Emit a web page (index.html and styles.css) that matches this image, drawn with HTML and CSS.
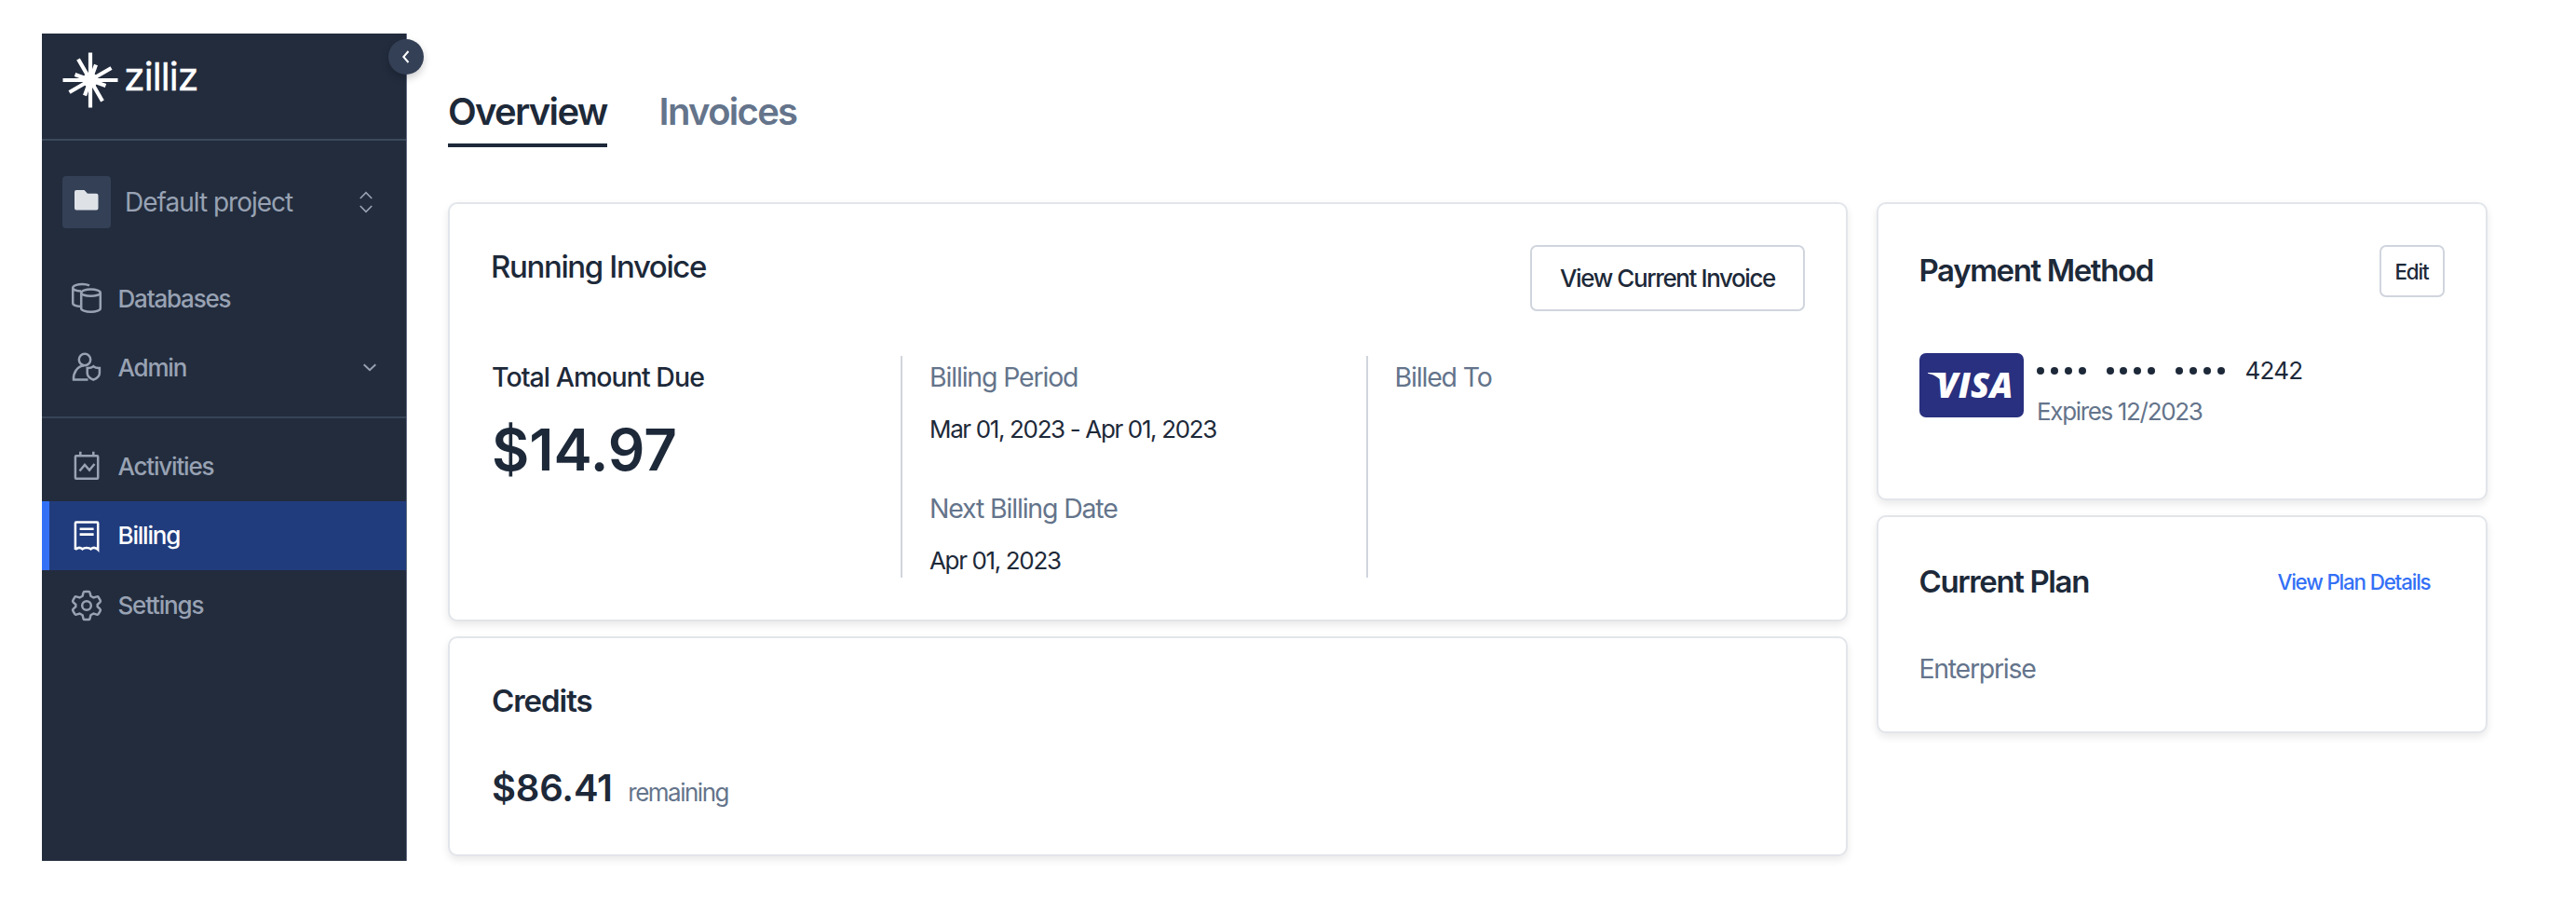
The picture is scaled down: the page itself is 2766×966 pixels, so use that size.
FILE: index.html
```html
<!DOCTYPE html>
<html lang="en">
<head>
<meta charset="utf-8">
<title>Billing</title>
<link rel="stylesheet" href="styles.css">
</head>
<body>
<div class="app">
  <aside class="sidebar">
    <button class="collapse" aria-label="Collapse sidebar">
      <svg width="10" height="16" viewBox="0 0 10 16"><path d="M7.500 2L2.300 8l5.200 6" fill="none" stroke="#fff" stroke-width="2"/></svg>
    </button>
    <div class="brand">
      <svg class="brand-mark" width="60" height="60" viewBox="-30 -30 60 60">
        <g stroke="#fff" stroke-width="4.200">
          <path d="M0-29.500V29.500M-29.500 0H29.500M-13-22.500L13 22.500M22.500-13L-22.500 13"/>
          <path d="M6-16.500L-6 16.500M-16.500-6L16.500 6"/>
        </g>
        <circle r="8" fill="#fff"/>
      </svg>
      <span class="brand-name">zilliz</span>
    </div>
    <div class="project">
      <span class="project-tile">
        <svg width="26" height="22" viewBox="0 0 26 22"><path d="M2 0H10.500L14 3.700H23.500a2 2 0 0 1 2 2V19.500a2 2 0 0 1-2 2H2a2 2 0 0 1-2-2V2a2 2 0 0 1 2-2z" fill="#dee2e7"/></svg>
      </span>
      <span class="project-name">Default project</span>
      <svg class="project-sort" width="14" height="24" viewBox="0 0 14 24"><path d="M.8 8L7 1.600 13.200 8M.8 16L7 22.400 13.200 16" fill="none" stroke="#98a2b3" stroke-width="1.700"/></svg>
    </div>
    <nav class="nav nav-top">
      <a class="nav-item">
        <svg class="nav-icon" viewBox="0 0 32 32"><ellipse cx="20.500" cy="10.200" rx="10.300" ry="3.600"/><path d="M10.200 10.200V27c0 2 4.600 3.700 10.300 3.700S30.800 29 30.800 27V10.200"/><path d="M19 2.400C17 1.500 14.500 1 11.700 1 5.800 1 1.200 2.700 1.200 4.800S5 8.400 10 8.600M1.200 4.800V21.500c0 1.800 3.500 3.300 9 3.600"/></svg>
        <span>Databases</span>
      </a>
      <a class="nav-item">
        <svg class="nav-icon" viewBox="0 0 32 32"><circle cx="14" cy="7" r="6.200"/><path d="M17.500 28.500H2c-.6-7 4-14.700 11-15"/><path d="M23.300 14.200c2 1.600 4.300 2 6.600 1.800v5.500c0 3.300-3 5.700-6.600 7.200-3.600-1.500-6.600-3.900-6.600-7.200V16c2.300.2 4.600-.2 6.600-1.800z"/></svg>
        <span>Admin</span>
        <svg class="nav-caret" width="14" height="9" viewBox="0 0 14 9"><path d="M.7 1.200L7 7.200 13.300 1.200" fill="none" stroke="#98a2b3" stroke-width="1.900"/></svg>
      </a>
    </nav>
    <nav class="nav nav-bottom">
      <a class="nav-item">
        <svg class="nav-icon" viewBox="0 0 32 32"><rect x="3.900" y="5.200" width="24.300" height="24.500" rx="1"/><path d="M9.300.8V5M23.300.8V5M8.500 21.500L14 15l5 5.500 5.500-6.500"/></svg>
        <span>Activities</span>
      </a>
      <a class="nav-item active">
        <svg class="nav-icon" viewBox="0 0 32 32"><path d="M3.900 31V2.500a1 1 0 0 1 1-1H27.200a1 1 0 0 1 1 1V31C25.500 28.200 23 28.200 20.500 30.300 18.500 28.600 13.500 28.600 11.500 30.300 9 28.200 6.500 28.200 3.900 31"/><path d="M8.600 8.700H23.600M8.600 14.600H23.600" stroke-width="2.600"/></svg>
        <span>Billing</span>
      </a>
      <a class="nav-item">
        <svg class="nav-icon" viewBox="0 0 32 32"><circle cx="16" cy="16" r="4.800"/><path d="M14 .9h4a1.500 1.500 0 0 1 1.500 1.200l.9 3.700 3 1.700 3.600-1.100a1.500 1.500 0 0 1 1.800.7l1.900 3.300a1.500 1.500 0 0 1-.3 1.900L27.700 14.900v2.200l2.700 2.600a1.500 1.500 0 0 1 .3 1.900l-1.900 3.300a1.500 1.500 0 0 1-1.800.7l-3.600-1.100-3 1.700-.9 3.700a1.500 1.500 0 0 1-1.500 1.200h-4a1.500 1.500 0 0 1-1.500-1.200l-.9-3.700-3-1.700-3.600 1.100a1.500 1.500 0 0 1-1.800-.7L1.300 21.600a1.500 1.500 0 0 1 .3-1.900L4.300 17.100v-2.200L1.600 12.300a1.500 1.500 0 0 1-.3-1.900L3.200 7.100A1.500 1.500 0 0 1 5 6.400l3.600 1.100 3-1.700.9-3.700A1.500 1.500 0 0 1 14 .9z"/></svg>
        <span>Settings</span>
      </a>
    </nav>
  </aside>

  <main class="main">
    <div class="tabs">
      <a class="tab current">Overview</a>
      <a class="tab">Invoices</a>
    </div>
    <div class="columns">
      <div class="col col-left">
        <section class="card invoice">
          <header class="card-head">
            <h2 class="title title-medium title-top">Running Invoice</h2>
            <button class="btn btn-large">View Current Invoice</button>
          </header>
          <div class="facts">
            <div class="fact fact-total">
              <div class="label label-strong">Total Amount Due</div>
              <div class="amount">$14.97</div>
            </div>
            <div class="fact fact-period">
              <div class="label">Billing Period</div>
              <div class="value">Mar 01, 2023 - Apr 01, 2023</div>
              <div class="label label-next">Next Billing Date</div>
              <div class="value">Apr 01, 2023</div>
            </div>
            <div class="fact fact-to">
              <div class="label">Billed To</div>
            </div>
          </div>
        </section>
        <section class="card credits">
          <h2 class="title title-credits">Credits</h2>
          <div class="credit-line"><span class="credit-amount">$86.41</span><span class="credit-note">remaining</span></div>
        </section>
      </div>
      <div class="col col-right">
        <section class="card payment">
          <header class="card-head">
            <h2 class="title title-payment">Payment Method</h2>
            <button class="btn btn-small">Edit</button>
          </header>
          <div class="method">
            <span class="visa">
              <span class="visa-name">VISA</span>
              <svg class="visa-flick" width="18" height="13" viewBox="0 0 18 13"><path d="M0 0H12.500a2 2 0 0 1 2 1.600L17 12.500C14 6.500 7.500 2.200 0 .8z" fill="#fff"/></svg>
            </span>
            <div class="method-info">
              <div class="number">
                <span class="dots"><i></i><i></i><i></i><i></i></span>
                <span class="dots"><i></i><i></i><i></i><i></i></span>
                <span class="dots"><i></i><i></i><i></i><i></i></span>
                <span class="last4">4242</span>
              </div>
              <div class="expires">Expires 12/2023</div>
            </div>
          </div>
        </section>
        <section class="card plan">
          <header class="card-head">
            <h2 class="title title-plan">Current Plan</h2>
            <a class="link">View Plan Details</a>
          </header>
          <div class="plan-name">Enterprise</div>
        </section>
      </div>
    </div>
  </main>
</div>
</body>
</html>
```
FILE: styles.css
```css
* { box-sizing: border-box; }
body { margin: 0; background: #fff; color: #1d2939; font-family: Inter, "Liberation Sans", sans-serif; }
.app { display: flex; width: 2766px; height: 966px; padding: 36px 0 42px 45px; white-space: nowrap; }

.sidebar { position: relative; flex: none; width: 392px; height: 888px; background: #222c3d; border-right: 1px solid #667085; color: #98a2b3; }
.collapse { position: absolute; left: 372px; top: 6px; width: 38px; height: 38px; padding: 0; border: 0; border-radius: 50%; background: #344056; box-shadow: 0 4px 8px rgba(0, 0, 0, .2); display: flex; align-items: center; justify-content: center; }
.brand { display: flex; height: 115px; padding: 20px 0 0 22px; border-bottom: 2px solid #3b495c; }
.brand-name { margin: 1px 0 0 6px; font-size: 41px; line-height: 50px; letter-spacing: -.900px; color: #fff; -webkit-text-stroke: .400px #fff; }
.project { display: flex; align-items: center; height: 56px; margin-top: 38px; padding: 0 36px 0 22px; }
.project-tile { display: flex; justify-content: center; width: 52px; height: 56px; padding-top: 15px; border-radius: 4px; background: #344056; }
.project-name { flex: 1; margin-left: 15px; font-size: 28px; line-height: 40px; letter-spacing: -1px; }
.nav-top { height: 166px; margin-top: 38px; border-bottom: 2px solid #374458; }
.nav-bottom { margin-top: 14px; }
.nav-item { display: flex; align-items: center; gap: 17.500px; height: 74.670px; padding: 0 32px; font-size: 26px; font-weight: 500; letter-spacing: -1.200px; }
.nav-icon { width: 32px; height: 32px; overflow: visible; fill: none; stroke: currentColor; stroke-width: 2.500; }
.nav-caret { margin-left: auto; }
.active { color: #fff; background: #213c7d; box-shadow: inset 8px 0 #3370f6; }

.main { padding: 60px 0 0 44px; }
.tabs { display: flex; gap: 56px; height: 121px; }
.tab { height: 61.500px; font-size: 40px; font-weight: 600; line-height: 48px; letter-spacing: -1.700px; color: #64748b; }
.current { color: #1d2939; border-bottom: 4px solid #1d2939; }
.columns { display: flex; gap: 30.500px; align-items: flex-start; }
.col { display: flex; flex-direction: column; gap: 15.500px; }
.col-left { width: 1503px; }
.col-right { width: 656px; }
.card { padding: 44px 44px 0; border: 2px solid #e2e5ea; border-radius: 10px; background: #fff; box-shadow: 0 4px 8px rgba(0, 0, 0, .09); }
.card-head { display: flex; justify-content: space-between; align-items: flex-start; }
.title { margin: 0; font-size: 33px; font-weight: 600; line-height: 40px; letter-spacing: -1.380px; }
.title-medium { font-weight: 500; }
.btn { border: 2px solid #d0d5dd; border-radius: 7px; background: #fff; color: inherit; font-family: inherit; font-weight: 500; padding: 0; }
.btn-large { width: 295px; height: 71px; font-size: 26px; letter-spacing: -1.400px; }
.btn-small { width: 70px; height: 56px; font-size: 22.400px; letter-spacing: -1.100px; }

.invoice { height: 450px; }
.title-top { margin-top: 3px; }
.facts { display: flex; height: 238px; margin-top: 48px; }
.fact { padding: 2.500px 0 0 29px; border-left: 2px solid #d0d5dd; }
.fact-total { width: 440px; padding-left: 1px; border: 0; }
.fact-period { width: 499.500px; }
.label { font-size: 28.500px; line-height: 40px; letter-spacing: -1.180px; color: #64748b; }
.label-strong { font-weight: 500; letter-spacing: -.950px; color: inherit; }
.amount { font-size: 62px; font-weight: 600; line-height: 70px; margin-top: 23px; }
.value { font-size: 26px; line-height: 40px; letter-spacing: -1.360px; margin-top: 16px; }
.label-next { margin-top: 45px; }

.credits { height: 236px; padding-left: 45px; }
.title-credits { margin-top: 3px; letter-spacing: -1.050px; }
.credit-line { display: flex; align-items: baseline; gap: 16.500px; margin-top: 48.500px; }
.credit-amount { font-size: 40px; font-weight: 600; line-height: 52px; letter-spacing: -.200px; }
.credit-note { font-size: 26px; letter-spacing: -1.500px; color: #64748b; }

.payment { height: 320px; }
.title-payment { margin-top: 7px; }
.method { display: flex; gap: 14.500px; margin-top: 59.500px; }
.visa { position: relative; display: flex; align-items: flex-start; width: 112px; height: 69px; padding: 14px 0 0 19px; border-radius: 7px; background: #29307f; color: #fff; }
.visa-name { font: italic 800 37px/40px "Open Sans", sans-serif; letter-spacing: .300px; }
.visa-flick { position: absolute; left: 9px; top: 21px; }
.number { display: flex; align-items: center; gap: 22px; height: 38px; }
.dots { display: flex; gap: 6.850px; }
.dots i { width: 8px; height: 8px; border-radius: 50%; background: #1d2939; }
.last4 { font-size: 26px; letter-spacing: -.800px; }
.expires { margin-top: 5px; font-size: 26px; line-height: 40px; letter-spacing: -1.340px; color: #64748b; }
.plan { height: 234px; }
.title-plan { margin-top: 5px; }
.link { margin: 6px 15px 0 0; font-size: 22.400px; font-weight: 500; line-height: 40px; letter-spacing: -1.180px; color: #3370f6; }
.plan-name { margin-top: 53px; font-size: 28.500px; line-height: 40px; letter-spacing: -1.300px; color: #64748b; }
```
